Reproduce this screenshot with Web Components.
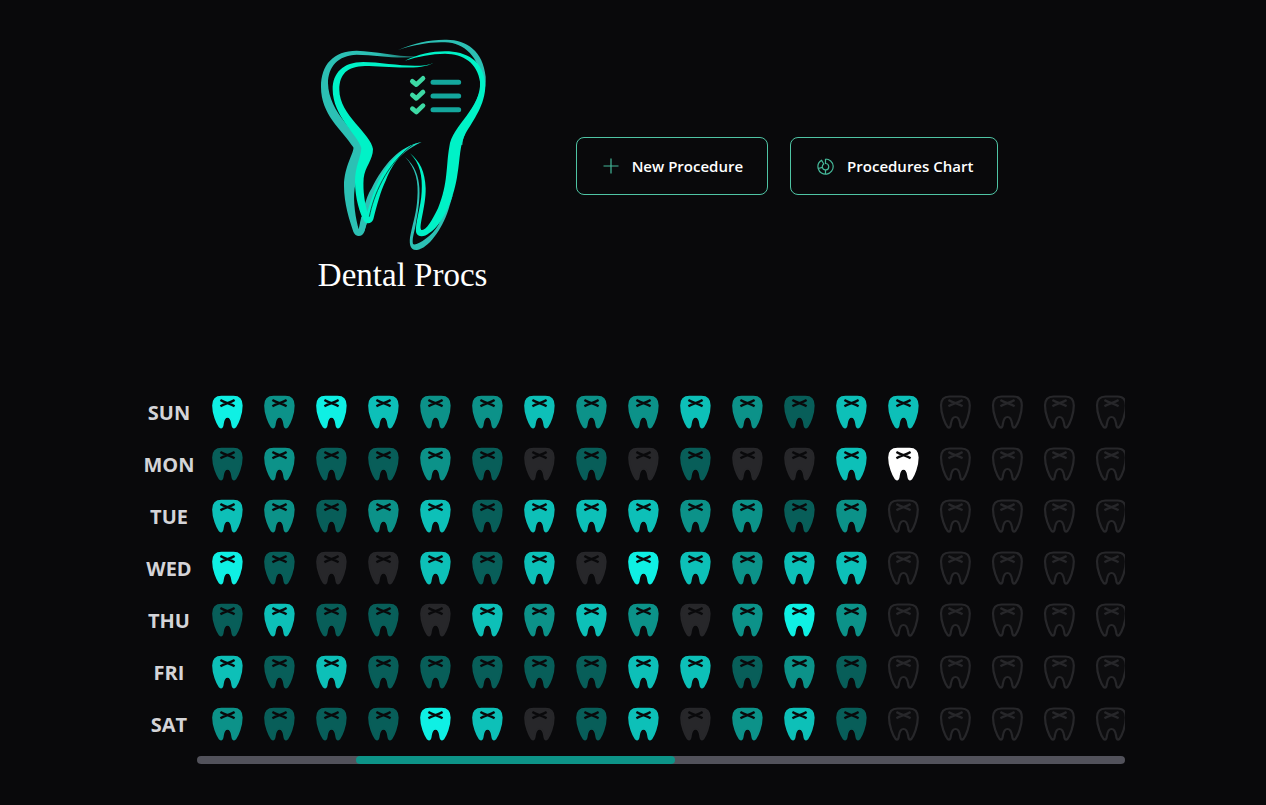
<!DOCTYPE html>
<html lang="en">
<head>
<meta charset="utf-8">
<title>Dental Procs</title>
<style>
body { margin: 0; background: #09090b; color: #fff; font-family: "Open Sans", "Noto Sans", sans-serif; }
</style>
</head>
<body>
<dental-app></dental-app>
<script>
class ShadowElement extends HTMLElement {
  constructor() {
    super();
    this.attachShadow({ mode: 'open' });
  }
  render(html) { this.shadowRoot.innerHTML = html; }
}

customElements.define('dental-logo', class extends ShadowElement {
  connectedCallback() {
    this.render(`
<style>
:host { display: flex; flex-direction: column; align-items: center; width: 270px; padding-bottom: 7px; }
svg { display: block; }
h1 { margin: 0; font: 400 33px/40px "Liberation Serif", serif; white-space: nowrap; }
</style>
<svg width="190" height="225" viewBox="-6 0 570 675" aria-hidden="true">
  <defs>
    <linearGradient id="fadeTop" x1="0" x2="1">
      <stop offset="0" stop-color="#2cc0b4"/><stop offset=".55" stop-color="#2cc0b4"/><stop offset="1" stop-color="#175a57"/>
    </linearGradient>
  </defs>
  <g fill="#2cc0b4">
    <path fill="url(#fadeTop)" d="M335 79C260 82 205 64 140 62C70 62 33 105 33 170C33 255 94 296 130 352C134 365 102 410 102 468C102 520 118 570 130 605C136 622 157 622 163 605L172 572L154 560L146 598C138 570 128 515 134 475C140 435 160 400 166 360C145 310 56 250 54 160C54 110 84 76 140 74C205 74 260 90 335 79Z"/>
    <path d="M163 604L150 590C155 560 165 505 185 475C220 405 265 350 335 336C260 370 225 430 200 490C185 520 178 560 163 604Z"/>
    <path d="M265 60C310 39 360 28 410 29C470 30 519 62 527 140C532 225 460 285 457 345L426 340C430 300 514 230 514 150C508 85 465 38 405 37C360 35 310 45 265 60Z"/>
    <path d="M285 381C345 430 330 515 317 585C312 612 306 625 309 642C318 650 365 620 385 585L430 490L415 540C395 600 355 655 321 660C299 662 296 638 302 612C310 575 320 545 322 505C326 455 318 415 285 381Z"/>
  </g>
  <g fill="#00f2c7">
    <path d="M372 98C325 120 225 96 160 96C98 96 68 130 68 178C68 260 145 315 154 355C152 385 135 410 135 455C135 505 150 550 162 573C169 584 185 582 190 568C201 525 211 485 228 450C250 395 285 350 335 336C270 349 230 405 205 455C190 485 180 520 172 546C165 520 158 485 161 445C165 410 189 390 189 357C184 312 88 255 88 180C88 132 112 109 165 108C225 108 325 124 372 98Z"/>
    <path d="M285 92C325 75 365 66 405 66C465 66 503 98 511 160C515 235 426 285 418 350C408 405 415 460 384 535C366 572 347 604 334 600C325 590 348 530 347 475C345 425 330 395 300 370C330 400 338 440 335 485C333 530 315 580 318 606C322 623 343 622 357 610C405 579 434 492 442 435C451 385 448 345 467 310C490 270 527 225 527 165C525 120 505 68 405 64C365 64 325 75 285 92Z" fill="none"/>
    <path d="M285 92C325 73 365 64 405 64C470 64 521 92 526 165C526 225 490 270 467 310C448 345 451 385 442 435C434 492 405 579 357 610C343 622 322 623 318 606C315 580 333 530 335 485C338 440 330 400 300 370C330 395 345 425 347 475C348 530 325 590 334 600C347 604 366 572 384 535C415 460 408 405 418 350C426 285 515 235 510 155C502 98 460 72 405 71C365 71 325 79 285 92Z"/>
  </g>
  <path fill="none" stroke="#09090b" stroke-width="2" d="M178 560C190 500 225 405 310 343"/>
  <g fill="none" stroke-linecap="round" stroke-linejoin="round">
    <path stroke="#3dd9a4" stroke-width="14" d="M307 154L319 164L339 145M307 195L319 205L339 186M307 236L319 246L339 227"/>
    <path stroke="#14a79d" stroke-width="15" d="M369 157H446M369 198H446M369 239H446"/>
  </g>
</svg>
<h1>Dental Procs</h1>`);
  }
});

customElements.define('action-button', class extends ShadowElement {
  connectedCallback() {
    this.render(`
<style>
:host { display: block; }
button { display: flex; align-items: center; gap: 13px; height: 58px; padding: 0 24px 0 26px; border: 1px solid #4fc4a4;
  border-radius: 8px; background: transparent; color: #fff; font: 600 15px/24px "Open Sans", sans-serif; white-space: nowrap; cursor: pointer; }
::slotted(svg) { display: block; flex: none; }
</style>
<button type="button"><slot name="icon"></slot><slot></slot></button>`);
  }
});

customElements.define('tooth-mark', class extends ShadowElement {
  connectedCallback() {
    const level = this.getAttribute('level');
    const fills = { a: '#0ff0e4', b: '#0dc0b8', c: '#0c9289', d: '#085e59', e: '#27272a', w: '#ffffff' };
    const planned = level === 'o';
    const body = planned
      ? 'fill="#0d0d0f" stroke="#27272a" stroke-width="2.2"'
      : `fill="${fills[level]}" stroke="${fills[level]}" stroke-width="1.7"`;
    this.render(`
<style>
:host { display: block; }
svg { display: block; }
</style>
<svg width="52" height="52" viewBox="0 0 52 52" aria-hidden="true">
  <path ${body} stroke-linejoin="round" d="M20.5 9.5H32.5C38 9.5 40.8 13 40.8 18.5C40.8 27 37 36.5 34.5 39.8C33.5 41 32.2 40.8 31.7 39.5C30.6 36.5 31.3 30 26.5 30C21.7 30 22.4 36.5 21.3 39.5C20.8 40.8 19.5 41 18.5 39.8C16 36.5 12 27 12 18.5C12 13 15 9.5 20.5 9.5Z"/>
  <path fill="none" stroke="${planned ? '#27272a' : '#09090b'}" stroke-width="2.2" d="M19.4 13C22 14.6 24 15.3 26.5 16.1C29 16.9 31 17.6 33.6 19.2M33.6 13C31 14.6 29 15.3 26.5 16.1C24 16.9 22 17.6 19.4 19.2"/>
</svg>`);
  }
});

customElements.define('week-chart', class extends ShadowElement {
  connectedCallback() {
    const days = [
      ['SUN', 'acabccbccbcdbboooo'],
      ['MON', 'dcddcdededeebwoooo'],
      ['TUE', 'bcdcbdbbbccdcooooo'],
      ['WED', 'adeebdbeabcbbooooo'],
      ['THU', 'dbddebcbcecacooooo'],
      ['FRI', 'bdbdddddbbdcdooooo'],
      ['SAT', 'cdddabedbecbdooooo']
    ];
    this.render(`
<style>
:host { display: block; max-width: 984px; }
.view { overflow: hidden; }
table { border-collapse: collapse; table-layout: fixed; width: 996px; }
th { box-sizing: border-box; width: 60px; padding: 0 4px 0 0; color: #d4d4d8; font-size: 20px; line-height: 28px; font-weight: 700; text-align: center; }
td { width: 52px; height: 52px; padding: 0; }
.track { display: flex; height: 8px; margin: 5px 0 0 56px; border-radius: 4px; background: #52525b; }
.track::before { content: ""; flex: 159; }
.thumb { flex: 319; border-radius: 4px; background: #0d9488; }
.track::after { content: ""; flex: 450; }
</style>
<div class="view"><table><tbody>
${days.map(([day, levels]) => `<tr><th scope="row">${day}</th>${[...levels].map(l => `<td><tooth-mark level="${l}"></tooth-mark></td>`).join('')}</tr>`).join('')}
</tbody></table></div>
<div class="track"><div class="thumb"></div></div>`);
  }
});

customElements.define('dental-app', class extends ShadowElement {
  connectedCallback() {
    this.render(`
<style>
:host { display: block; padding: 30px 16px 40px; }
header { display: flex; justify-content: center; align-items: center; gap: 38px; margin-bottom: 85px; }
.actions { display: flex; gap: 22px; }
week-chart { margin: 0 auto; }
</style>
<header>
  <dental-logo></dental-logo>
  <div class="actions">
    <action-button>
      <svg slot="icon" width="16" height="16" viewBox="0 0 16 16" fill="none" stroke="#45b899" stroke-width="1.2" aria-hidden="true"><path d="M8 0.5V15.5M0.5 8H15.5"/></svg>
      New Procedure
    </action-button>
    <action-button>
      <svg slot="icon" width="17" height="17" viewBox="0 0 17 17" fill="none" stroke="#45b899" stroke-width="1.2" stroke-linejoin="round" aria-hidden="true"><path d="M8.5 1V5.5A3.2 3.2 0 1 1 5.4 9.4L1.2 10.5A7.6 7.6 0 1 0 8.5 1M1.2 10.5A7.6 7.6 0 0 1 4.6 2.2L6.8 6A3.2 3.2 0 0 0 5.4 9.4M8.5 11.8V16"/></svg>
      Procedures Chart
    </action-button>
  </div>
</header>
<week-chart></week-chart>`);
  }
});
</script>
</body>
</html>
